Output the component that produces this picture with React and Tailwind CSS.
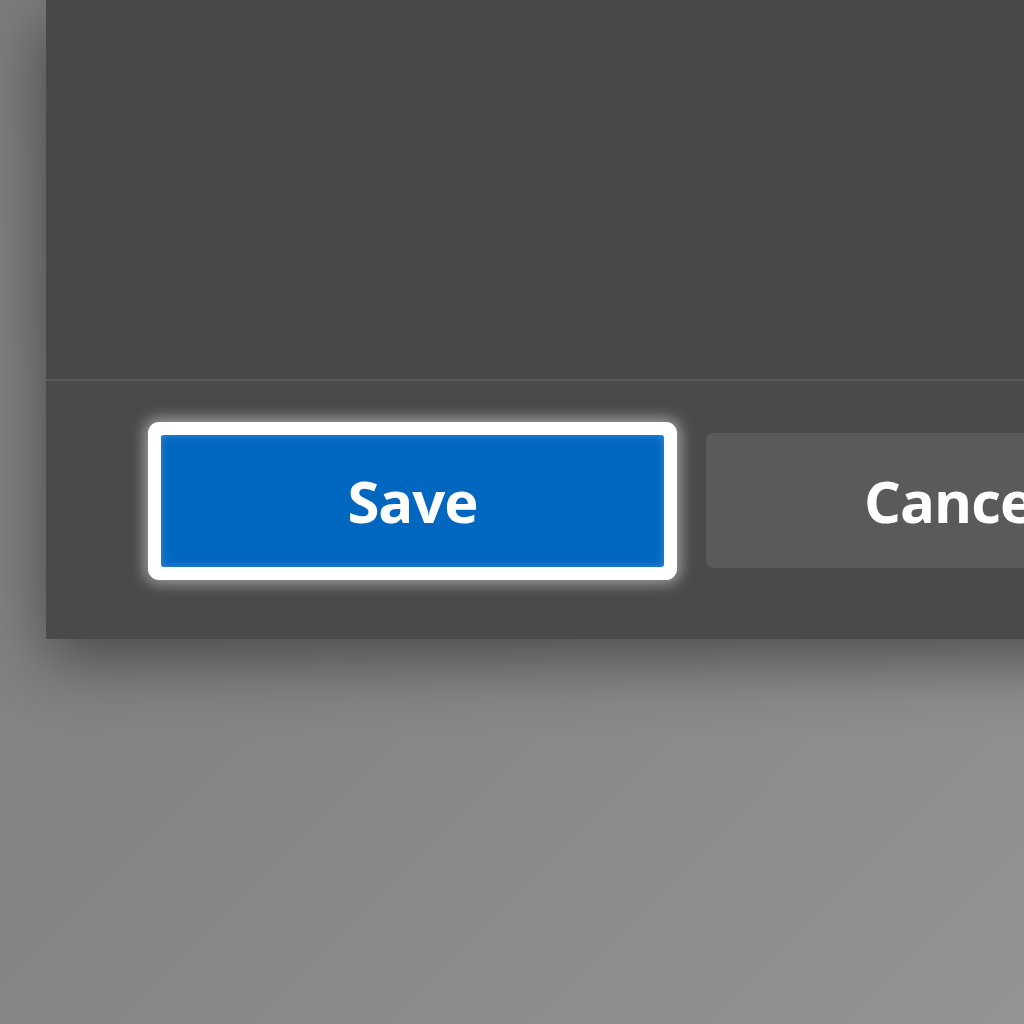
export default function App() {
  const font = { fontFamily: '"Open Sans", "Noto Sans", "Liberation Sans", sans-serif' };
  return (
    <div className="w-[1024px] h-[1024px] overflow-hidden bg-gradient-to-br from-[#7c7c7c] via-[#858585] to-[#939393]">
      <div className="pl-[46px] w-[1200px]">
        <div className="w-[1154px] flex flex-col shadow-[0_20px_60px_rgba(0,0,0,0.45)]">
          <div className="h-[381px] bg-[#484848] border-b-2 border-[#5c5c5c]"></div>
          <div className="h-[258px] bg-[#4a4a4a] flex items-start pl-[102px] pt-[41px] gap-[29px]" style={font}>
            <button className="shrink-0 w-[529px] h-[158px] bg-white rounded-[11px] p-[13px] shadow-[0_0_14px_4px_rgba(255,255,255,0.45)]">
              <div className="w-full h-full rounded-[3px] bg-[#0067c0] shadow-[inset_0_0_10px_rgba(90,170,240,0.55)] flex items-center justify-center text-white text-[58px] font-bold leading-none tracking-[-1px]">
                Save
              </div>
            </button>
            <button className="shrink-0 mt-[11px] w-[502px] h-[135px] rounded-[7px] bg-[#5a5a5a] flex items-center justify-center text-white text-[58px] font-bold leading-none tracking-[-1px]">
              Cancel
            </button>
          </div>
        </div>
      </div>
    </div>
  );
}
